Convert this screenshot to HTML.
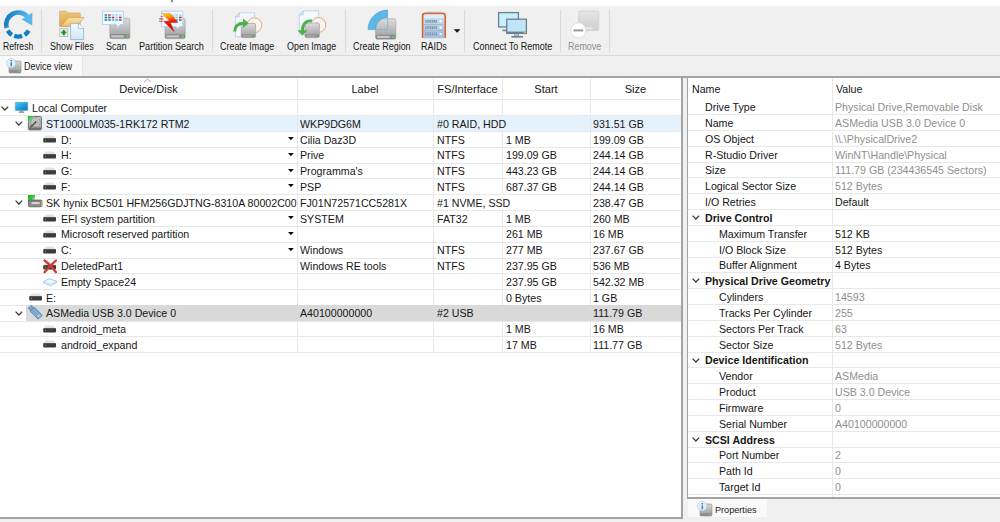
<!DOCTYPE html><html><head><meta charset="utf-8"><style>
*{margin:0;padding:0;box-sizing:border-box}
html,body{width:1000px;height:522px;overflow:hidden;background:#f0f0f0;font-family:"Liberation Sans", sans-serif;color:#000}
.a{position:absolute}
svg{position:absolute;overflow:visible}
.t{position:absolute;white-space:nowrap;font-size:11.5px;line-height:16px;height:16px;transform:scaleX(0.925);transform-origin:0 0;color:#161616}
.tc{transform-origin:50% 0;text-align:center;transform:scaleX(0.965)}
.tb{position:absolute;white-space:nowrap;font-size:9.5px;line-height:12px;transform:scaleX(0.94);transform-origin:0 0;color:#1a1a1a}
.hl{position:absolute;height:1px;background:#e8e8e8}
.vl{position:absolute;width:1px;background:#e8e8e8}
.g{color:#8f8f8f}
.b{font-weight:bold}
</style></head><body>
<div class="a" style="left:0;top:0;width:1000px;height:5px;background:#fff"></div>
<div class="a" style="left:0;top:5px;width:1000px;height:1px;background:#f9f9f9"></div>
<div class="a" style="left:0;top:6px;width:1000px;height:1px;background:#f4f4f4"></div>
<div class="a" style="left:0;top:55px;width:1000px;height:1px;background:#d8d8d8"></div>
<div class="a" style="left:0;top:56px;width:82px;height:20px;background:#f9f9f9"></div>
<div class="a" style="left:82px;top:56px;width:1px;height:20px;background:#e6e6e6"></div>
<div class="tb" style="left:23.8px;top:61.4px;font-size:10px;transform:scaleX(0.9)">Device view</div>
<div class="a" style="left:0;top:76px;width:1000px;height:2px;background:#a3a3a3"></div>
<div class="a" style="left:0;top:78px;width:681px;height:439px;background:#fff"></div>
<div class="a" style="left:681px;top:76px;width:2px;height:443px;background:#a3a3a3"></div>
<div class="a" style="left:0;top:517px;width:683px;height:2px;background:#a3a3a3"></div>
<div class="a" style="left:688px;top:78px;width:312px;height:420px;background:#fff"></div>
<div class="a" style="left:687px;top:76px;width:1px;height:423px;background:#a3a3a3"></div>
<div class="a" style="left:687px;top:497px;width:313px;height:2px;background:#a3a3a3"></div>
<div class="a" style="left:688px;top:499px;width:79px;height:18px;background:#f9f9f9"></div>
<div class="tb" style="left:714.8px;top:503.5px;transform:scaleX(0.96)">Properties</div>
<svg style="left:6px;top:58px" width="16" height="16" viewBox="0 0 16 16"><defs><linearGradient id="idg" x1="0" y1="0" x2="0" y2="1"><stop offset="0" stop-color="#d4d4d4"/><stop offset="1" stop-color="#9a9a9a"/></linearGradient></defs><rect x="3" y="3" width="12" height="12" rx="1.2" fill="url(#idg)" stroke="#8a8a8a" stroke-width="0.6"/><rect x="3.3" y="12.2" width="11.4" height="2.5" fill="#8c8c8c"/><rect x="12" y="13" width="2" height="1" fill="#6fd36f"/><circle cx="5.2" cy="5.2" r="4.6" fill="#e6f2fa" fill-opacity="0.95" stroke="#a9cbe3" stroke-width="0.7"/><rect x="4.5" y="4.3" width="1.6" height="4" fill="#4d87b5"/><rect x="4.5" y="2" width="1.6" height="1.5" fill="#4d87b5"/></svg>
<svg style="left:697px;top:501px" width="16" height="16" viewBox="0 0 16 16"><defs><linearGradient id="idg" x1="0" y1="0" x2="0" y2="1"><stop offset="0" stop-color="#d4d4d4"/><stop offset="1" stop-color="#9a9a9a"/></linearGradient></defs><rect x="3" y="3" width="12" height="12" rx="1.2" fill="url(#idg)" stroke="#8a8a8a" stroke-width="0.6"/><rect x="3.3" y="12.2" width="11.4" height="2.5" fill="#8c8c8c"/><rect x="12" y="13" width="2" height="1" fill="#6fd36f"/><circle cx="5.2" cy="5.2" r="4.6" fill="#e6f2fa" fill-opacity="0.95" stroke="#a9cbe3" stroke-width="0.7"/><rect x="4.5" y="4.3" width="1.6" height="4" fill="#4d87b5"/><rect x="4.5" y="2" width="1.6" height="1.5" fill="#4d87b5"/></svg>
<div class="t tc" style="left:0;top:81px;width:297px">Device/Disk</div>
<div class="t tc" style="left:297px;top:81px;width:136px">Label</div>
<div class="t tc" style="left:433px;top:81px;width:69px">FS/Interface</div>
<div class="t tc" style="left:502px;top:81px;width:88px">Start</div>
<div class="t tc" style="left:590px;top:81px;width:91px">Size</div>
<svg style="left:143.4px;top:77.6px" width="9" height="5" viewBox="0 0 9 5"><path d="M1 4.2 L4.5 1 L8 4.2" fill="none" stroke="#9a9a9a" stroke-width="0.9"/></svg>
<div class="hl" style="left:0;top:99px;width:681px"></div>
<div class="hl" style="left:0;top:115px;width:681px"></div>
<svg style="left:1px;top:106px" width="8" height="5" viewBox="0 0 8 5"><path d="M0.6 0.6 L3.9 4 L7.2 0.6" fill="none" stroke="#3a3a3a" stroke-width="1.25"/></svg>
<svg style="left:14.5px;top:102px" width="13" height="11" viewBox="0 0 13 11"><defs><linearGradient id="pcg" x1="0" y1="0" x2="1" y2="1"><stop offset="0" stop-color="#3ed0f2"/><stop offset="1" stop-color="#0a6fc2"/></linearGradient></defs><rect x="0.3" y="0.3" width="12.4" height="8.2" rx="0.4" fill="url(#pcg)" stroke="#5a8fb8" stroke-width="0.5"/><rect x="5.7" y="8.5" width="1.6" height="1.2" fill="#7a8a96"/><rect x="3.8" y="9.6" width="5.4" height="1" fill="#55606a"/></svg>
<div class="t" style="left:32px;top:100.0px;max-width:286.48648648648646px;overflow:hidden">Local Computer</div>
<div class="a" style="left:26px;top:116px;width:655px;height:15px;background:#e5f1fb"></div>
<div class="hl" style="left:0;top:131px;width:681px"></div>
<svg style="left:15px;top:121px" width="8" height="5" viewBox="0 0 8 5"><path d="M0.6 0.6 L3.9 4 L7.2 0.6" fill="none" stroke="#3a3a3a" stroke-width="1.25"/></svg>
<svg style="left:27.6px;top:115.6px" width="14" height="15" viewBox="0 0 14 15"><defs><linearGradient id="hdg" x1="0" y1="0" x2="0" y2="1"><stop offset="0" stop-color="#c4c4c4"/><stop offset="1" stop-color="#a4a4a4"/></linearGradient><linearGradient id="hgr" x1="0" y1="0" x2="1" y2="1"><stop offset="0" stop-color="#00c000"/><stop offset="0.5" stop-color="#60d060" stop-opacity="0.5"/></linearGradient></defs><rect x="0.5" y="0.5" width="13" height="13.4" rx="1.5" fill="url(#hdg)" stroke="#6a6a6a" stroke-width="0.9"/><circle cx="7.5" cy="6.2" r="4.6" fill="#d2d2d2" stroke="#8a8a8a" stroke-width="0.8"/><circle cx="7.5" cy="6.2" r="2.6" fill="none" stroke="#9c9c9c" stroke-width="0.8"/><circle cx="7.5" cy="6.2" r="1" fill="#303030"/><path d="M6.6 7.4 L2.8 11" stroke="#5e5e5e" stroke-width="1.8" stroke-linecap="round"/><rect x="0.9" y="11.6" width="12.2" height="2" fill="#707070"/><path d="M0 0 H7.4 L0 7.4 Z" fill="url(#hgr)"/></svg>
<div class="t" style="left:45.8px;top:115.8px;max-width:271.56756756756755px;overflow:hidden">ST1000LM035-1RK172 RTM2</div>
<div class="t" style="left:300px;top:115.8px">WKP9DG6M</div>
<div class="t" style="left:436.5px;top:115.8px">#0 RAID, HDD</div>
<div class="t" style="left:593px;top:115.8px">931.51 GB</div>
<div class="hl" style="left:0;top:147px;width:681px"></div>
<svg style="left:43px;top:136px" width="14" height="8" viewBox="0 0 14 8"><path d="M2.6 -0.4 H10.6 L12.6 2.2 H0.6 Z" fill="#e2e2e2"/><rect x="0.2" y="1.9" width="12.8" height="4.6" rx="1.1" fill="#3a3a3a"/><rect x="1" y="2.3" width="11.2" height="0.8" fill="#5e5e5e"/><circle cx="2.5" cy="4.4" r="0.65" fill="#3cb83c"/></svg>
<div class="t" style="left:60.5px;top:131.6px;max-width:255.67567567567568px;overflow:hidden">D:</div>
<svg style="left:288.3px;top:136.5px" width="6" height="4" viewBox="0 0 6 4"><path d="M0 0 H5.8 L2.9 3.3 Z" fill="#0a0a0a"/></svg>
<div class="t" style="left:300px;top:131.6px">Cilia Daz3D</div>
<div class="t" style="left:436.5px;top:131.6px">NTFS</div>
<div class="t" style="left:505.5px;top:131.6px">1 MB</div>
<div class="t" style="left:593px;top:131.6px">199.09 GB</div>
<div class="hl" style="left:0;top:163px;width:681px"></div>
<svg style="left:43px;top:152px" width="14" height="8" viewBox="0 0 14 8"><path d="M2.6 -0.4 H10.6 L12.6 2.2 H0.6 Z" fill="#e2e2e2"/><rect x="0.2" y="1.9" width="12.8" height="4.6" rx="1.1" fill="#3a3a3a"/><rect x="1" y="2.3" width="11.2" height="0.8" fill="#5e5e5e"/><circle cx="2.5" cy="4.4" r="0.65" fill="#3cb83c"/></svg>
<div class="t" style="left:60.5px;top:147.4px;max-width:255.67567567567568px;overflow:hidden">H:</div>
<svg style="left:288.3px;top:152.5px" width="6" height="4" viewBox="0 0 6 4"><path d="M0 0 H5.8 L2.9 3.3 Z" fill="#0a0a0a"/></svg>
<div class="t" style="left:300px;top:147.4px">Prive</div>
<div class="t" style="left:436.5px;top:147.4px">NTFS</div>
<div class="t" style="left:505.5px;top:147.4px">199.09 GB</div>
<div class="t" style="left:593px;top:147.4px">244.14 GB</div>
<div class="hl" style="left:0;top:178px;width:681px"></div>
<svg style="left:43px;top:168px" width="14" height="8" viewBox="0 0 14 8"><path d="M2.6 -0.4 H10.6 L12.6 2.2 H0.6 Z" fill="#e2e2e2"/><rect x="0.2" y="1.9" width="12.8" height="4.6" rx="1.1" fill="#3a3a3a"/><rect x="1" y="2.3" width="11.2" height="0.8" fill="#5e5e5e"/><circle cx="2.5" cy="4.4" r="0.65" fill="#3cb83c"/></svg>
<div class="t" style="left:60.5px;top:163.2px;max-width:255.67567567567568px;overflow:hidden">G:</div>
<svg style="left:288.3px;top:168.5px" width="6" height="4" viewBox="0 0 6 4"><path d="M0 0 H5.8 L2.9 3.3 Z" fill="#0a0a0a"/></svg>
<div class="t" style="left:300px;top:163.2px">Programma&#x27;s</div>
<div class="t" style="left:436.5px;top:163.2px">NTFS</div>
<div class="t" style="left:505.5px;top:163.2px">443.23 GB</div>
<div class="t" style="left:593px;top:163.2px">244.14 GB</div>
<div class="hl" style="left:0;top:194px;width:681px"></div>
<svg style="left:43px;top:183px" width="14" height="8" viewBox="0 0 14 8"><path d="M2.6 -0.4 H10.6 L12.6 2.2 H0.6 Z" fill="#e2e2e2"/><rect x="0.2" y="1.9" width="12.8" height="4.6" rx="1.1" fill="#3a3a3a"/><rect x="1" y="2.3" width="11.2" height="0.8" fill="#5e5e5e"/><circle cx="2.5" cy="4.4" r="0.65" fill="#3cb83c"/></svg>
<div class="t" style="left:60.5px;top:179.0px;max-width:255.67567567567568px;overflow:hidden">F:</div>
<svg style="left:288.3px;top:183.5px" width="6" height="4" viewBox="0 0 6 4"><path d="M0 0 H5.8 L2.9 3.3 Z" fill="#0a0a0a"/></svg>
<div class="t" style="left:300px;top:179.0px">PSP</div>
<div class="t" style="left:436.5px;top:179.0px">NTFS</div>
<div class="t" style="left:505.5px;top:179.0px">687.37 GB</div>
<div class="t" style="left:593px;top:179.0px">244.14 GB</div>
<div class="hl" style="left:0;top:210px;width:681px"></div>
<svg style="left:15px;top:200px" width="8" height="5" viewBox="0 0 8 5"><path d="M0.6 0.6 L3.9 4 L7.2 0.6" fill="none" stroke="#3a3a3a" stroke-width="1.25"/></svg>
<svg style="left:28px;top:194.5px" width="15" height="13" viewBox="0 0 15 13"><defs><linearGradient id="nvg" x1="0" y1="0" x2="1" y2="1"><stop offset="0" stop-color="#00c000"/><stop offset="0.55" stop-color="#40c840"/><stop offset="1" stop-color="#e0f4e0" stop-opacity="0.2"/></linearGradient></defs><rect x="0" y="0" width="7" height="7" fill="url(#nvg)"/><rect x="0.4" y="5" width="13.6" height="6.8" rx="1.4" fill="#8a8a8a" stroke="#555" stroke-width="0.7"/><rect x="3" y="6.7" width="9" height="3" fill="#d2d2d2" stroke="#6a6a6a" stroke-width="0.5"/><rect x="13.2" y="6" width="1" height="5" fill="#e0b050"/></svg>
<div class="t" style="left:45.8px;top:194.8px;max-width:271.56756756756755px;overflow:hidden">SK hynix BC501 HFM256GDJTNG-8310A 80002C00</div>
<div class="t" style="left:300px;top:194.8px">FJ01N72571CC5281X</div>
<div class="t" style="left:436.5px;top:194.8px">#1 NVME, SSD</div>
<div class="t" style="left:593px;top:194.8px">238.47 GB</div>
<div class="hl" style="left:0;top:226px;width:681px"></div>
<svg style="left:43px;top:215px" width="14" height="8" viewBox="0 0 14 8"><path d="M2.6 -0.4 H10.6 L12.6 2.2 H0.6 Z" fill="#e2e2e2"/><rect x="0.2" y="1.9" width="12.8" height="4.6" rx="1.1" fill="#3a3a3a"/><rect x="1" y="2.3" width="11.2" height="0.8" fill="#5e5e5e"/><circle cx="2.5" cy="4.4" r="0.65" fill="#3cb83c"/></svg>
<div class="t" style="left:60.5px;top:210.60000000000002px;max-width:255.67567567567568px;overflow:hidden">EFI system partition</div>
<svg style="left:288.3px;top:215.5px" width="6" height="4" viewBox="0 0 6 4"><path d="M0 0 H5.8 L2.9 3.3 Z" fill="#0a0a0a"/></svg>
<div class="t" style="left:300px;top:210.60000000000002px">SYSTEM</div>
<div class="t" style="left:436.5px;top:210.60000000000002px">FAT32</div>
<div class="t" style="left:505.5px;top:210.60000000000002px">1 MB</div>
<div class="t" style="left:593px;top:210.60000000000002px">260 MB</div>
<div class="hl" style="left:0;top:242px;width:681px"></div>
<svg style="left:43px;top:231px" width="14" height="8" viewBox="0 0 14 8"><path d="M2.6 -0.4 H10.6 L12.6 2.2 H0.6 Z" fill="#e2e2e2"/><rect x="0.2" y="1.9" width="12.8" height="4.6" rx="1.1" fill="#3a3a3a"/><rect x="1" y="2.3" width="11.2" height="0.8" fill="#5e5e5e"/><circle cx="2.5" cy="4.4" r="0.65" fill="#3cb83c"/></svg>
<div class="t" style="left:60.5px;top:226.4px;max-width:255.67567567567568px;overflow:hidden">Microsoft reserved partition</div>
<svg style="left:288.3px;top:231.5px" width="6" height="4" viewBox="0 0 6 4"><path d="M0 0 H5.8 L2.9 3.3 Z" fill="#0a0a0a"/></svg>
<div class="t" style="left:505.5px;top:226.4px">261 MB</div>
<div class="t" style="left:593px;top:226.4px">16 MB</div>
<div class="hl" style="left:0;top:258px;width:681px"></div>
<svg style="left:43px;top:247px" width="14" height="8" viewBox="0 0 14 8"><path d="M2.6 -0.4 H10.6 L12.6 2.2 H0.6 Z" fill="#e2e2e2"/><rect x="0.2" y="1.9" width="12.8" height="4.6" rx="1.1" fill="#3a3a3a"/><rect x="1" y="2.3" width="11.2" height="0.8" fill="#5e5e5e"/><circle cx="2.5" cy="4.4" r="0.65" fill="#3cb83c"/></svg>
<div class="t" style="left:60.5px;top:242.20000000000002px;max-width:255.67567567567568px;overflow:hidden">C:</div>
<svg style="left:288.3px;top:247.5px" width="6" height="4" viewBox="0 0 6 4"><path d="M0 0 H5.8 L2.9 3.3 Z" fill="#0a0a0a"/></svg>
<div class="t" style="left:300px;top:242.20000000000002px">Windows</div>
<div class="t" style="left:436.5px;top:242.20000000000002px">NTFS</div>
<div class="t" style="left:505.5px;top:242.20000000000002px">277 MB</div>
<div class="t" style="left:593px;top:242.20000000000002px">237.67 GB</div>
<div class="hl" style="left:0;top:273px;width:681px"></div>
<svg style="left:43px;top:263px" width="14" height="8" viewBox="0 0 14 8"><path d="M2.6 -0.4 H10.6 L12.6 2.2 H0.6 Z" fill="#e2e2e2"/><rect x="0.2" y="1.9" width="12.8" height="4.6" rx="1.1" fill="#3a3a3a"/><rect x="1" y="2.3" width="11.2" height="0.8" fill="#5e5e5e"/><circle cx="2.5" cy="4.4" r="0.65" fill="#3cb83c"/></svg><svg style="left:43px;top:259px" width="15" height="15" viewBox="0 0 15 15"><path d="M1.5 1.5 C5 4 9 8 13 13.2 M13 1.5 C9 5 5 9 1.5 13.2" fill="none" stroke="#d23a34" stroke-width="2.3" stroke-linecap="round"/></svg>
<div class="t" style="left:60.5px;top:258.0px;max-width:255.67567567567568px;overflow:hidden">DeletedPart1</div>
<div class="t" style="left:300px;top:258.0px">Windows RE tools</div>
<div class="t" style="left:436.5px;top:258.0px">NTFS</div>
<div class="t" style="left:505.5px;top:258.0px">237.95 GB</div>
<div class="t" style="left:593px;top:258.0px">536 MB</div>
<div class="hl" style="left:0;top:289px;width:681px"></div>
<svg style="left:42px;top:277.5px" width="16" height="10" viewBox="0 0 16 10"><path d="M1.6 3.6 L7.2 0.8 L14.6 3 L14.6 4.4 L8.6 7.6 L1.6 5 Z" fill="#f2f9fe" stroke="#8ec6ef" stroke-width="0.9" stroke-linejoin="round"/><path d="M1.6 3.6 L8.6 6.2 L14.6 3" fill="none" stroke="#a6d2f2" stroke-width="0.6"/></svg>
<div class="t" style="left:60.5px;top:273.8px;max-width:255.67567567567568px;overflow:hidden">Empty Space24</div>
<div class="t" style="left:505.5px;top:273.8px">237.95 GB</div>
<div class="t" style="left:593px;top:273.8px">542.32 MB</div>
<div class="hl" style="left:0;top:305px;width:681px"></div>
<svg style="left:29px;top:294px" width="14" height="8" viewBox="0 0 14 8"><path d="M2.6 -0.4 H10.6 L12.6 2.2 H0.6 Z" fill="#e2e2e2"/><rect x="0.2" y="1.9" width="12.8" height="4.6" rx="1.1" fill="#3a3a3a"/><rect x="1" y="2.3" width="11.2" height="0.8" fill="#5e5e5e"/><circle cx="2.5" cy="4.4" r="0.65" fill="#3cb83c"/></svg>
<div class="t" style="left:45.8px;top:289.6px;max-width:271.56756756756755px;overflow:hidden">E:</div>
<div class="t" style="left:505.5px;top:289.6px">0 Bytes</div>
<div class="t" style="left:593px;top:289.6px">1 GB</div>
<div class="a" style="left:26px;top:305px;width:655px;height:16px;background:#d9d9d9"></div>
<div class="hl" style="left:0;top:321px;width:681px"></div>
<svg style="left:15px;top:311px" width="8" height="5" viewBox="0 0 8 5"><path d="M0.6 0.6 L3.9 4 L7.2 0.6" fill="none" stroke="#3a3a3a" stroke-width="1.25"/></svg>
<svg style="left:28px;top:305px" width="15" height="15" viewBox="0 0 15 15"><g transform="rotate(-45 7.5 7.5)"><rect x="5.4" y="-0.6" width="4.2" height="3.4" fill="#7ea8d0" stroke="#4e7aa8" stroke-width="0.7"/><rect x="4.6" y="2.8" width="5.8" height="11.4" rx="1" fill="#7ea8d0" stroke="#4e7aa8" stroke-width="0.7"/><rect x="6.4" y="11.4" width="2.2" height="1.4" fill="#d6e4f0"/></g></svg>
<div class="t" style="left:45.8px;top:305.4px;max-width:271.56756756756755px;overflow:hidden">ASMedia USB 3.0 Device 0</div>
<div class="t" style="left:300px;top:305.4px">A40100000000</div>
<div class="t" style="left:436.5px;top:305.4px">#2 USB</div>
<div class="t" style="left:593px;top:305.4px">111.79 GB</div>
<div class="hl" style="left:0;top:336px;width:681px"></div>
<svg style="left:43px;top:326px" width="14" height="8" viewBox="0 0 14 8"><path d="M2.6 -0.4 H10.6 L12.6 2.2 H0.6 Z" fill="#e2e2e2"/><rect x="0.2" y="1.9" width="12.8" height="4.6" rx="1.1" fill="#3a3a3a"/><rect x="1" y="2.3" width="11.2" height="0.8" fill="#5e5e5e"/><circle cx="2.5" cy="4.4" r="0.65" fill="#3cb83c"/></svg>
<div class="t" style="left:60.5px;top:321.20000000000005px;max-width:255.67567567567568px;overflow:hidden">android_meta</div>
<div class="t" style="left:505.5px;top:321.20000000000005px">1 MB</div>
<div class="t" style="left:593px;top:321.20000000000005px">16 MB</div>
<div class="hl" style="left:0;top:352px;width:681px"></div>
<svg style="left:43px;top:341px" width="14" height="8" viewBox="0 0 14 8"><path d="M2.6 -0.4 H10.6 L12.6 2.2 H0.6 Z" fill="#e2e2e2"/><rect x="0.2" y="1.9" width="12.8" height="4.6" rx="1.1" fill="#3a3a3a"/><rect x="1" y="2.3" width="11.2" height="0.8" fill="#5e5e5e"/><circle cx="2.5" cy="4.4" r="0.65" fill="#3cb83c"/></svg>
<div class="t" style="left:60.5px;top:337.0px;max-width:255.67567567567568px;overflow:hidden">android_expand</div>
<div class="t" style="left:505.5px;top:337.0px">17 MB</div>
<div class="t" style="left:593px;top:337.0px">111.77 GB</div>
<div class="vl" style="left:297px;top:78px;height:227px"></div>
<div class="vl" style="left:297px;top:322px;height:30px"></div>
<div class="vl" style="left:433px;top:78px;height:227px"></div>
<div class="vl" style="left:433px;top:322px;height:30px"></div>
<div class="vl" style="left:590px;top:78px;height:227px"></div>
<div class="vl" style="left:590px;top:322px;height:30px"></div>
<div class="vl" style="left:502px;top:78px;height:38px"></div>
<div class="vl" style="left:502px;top:132px;height:63px"></div>
<div class="vl" style="left:502px;top:211px;height:94px"></div>
<div class="vl" style="left:502px;top:322px;height:30px"></div>
<div class="t" style="left:691.5px;top:81px">Name</div>
<div class="t" style="left:835.8px;top:81px">Value</div>
<div class="hl" style="left:688px;top:114px;width:312px"></div>
<div class="t" style="left:704.5px;top:99.1px">Drive Type</div>
<div class="t g" style="left:834.5px;top:99.1px">Physical Drive,Removable Disk</div>
<div class="hl" style="left:688px;top:130px;width:312px"></div>
<div class="t" style="left:704.5px;top:114.92999999999999px">Name</div>
<div class="t g" style="left:834.5px;top:114.92999999999999px">ASMedia USB 3.0 Device 0</div>
<div class="hl" style="left:688px;top:146px;width:312px"></div>
<div class="t" style="left:704.5px;top:130.76000000000002px">OS Object</div>
<div class="t g" style="left:834.5px;top:130.76000000000002px">\\.\PhysicalDrive2</div>
<div class="hl" style="left:688px;top:162px;width:312px"></div>
<div class="t" style="left:704.5px;top:146.59px">R-Studio Driver</div>
<div class="t g" style="left:834.5px;top:146.59px">WinNT\Handle\Physical</div>
<div class="hl" style="left:688px;top:177px;width:312px"></div>
<div class="t" style="left:704.5px;top:162.42000000000002px">Size</div>
<div class="t g" style="left:834.5px;top:162.42000000000002px">111.79 GB (234436545 Sectors)</div>
<div class="hl" style="left:688px;top:193px;width:312px"></div>
<div class="t" style="left:704.5px;top:178.25px">Logical Sector Size</div>
<div class="t g" style="left:834.5px;top:178.25px">512 Bytes</div>
<div class="hl" style="left:688px;top:209px;width:312px"></div>
<div class="t" style="left:704.5px;top:194.08px">I/O Retries</div>
<div class="t " style="left:834.5px;top:194.08px">Default</div>
<div class="hl" style="left:688px;top:225px;width:312px"></div>
<svg style="left:692px;top:215px" width="8" height="5" viewBox="0 0 8 5"><path d="M0.6 0.6 L3.9 4 L7.2 0.6" fill="none" stroke="#3a3a3a" stroke-width="1.25"/></svg>
<div class="t b" style="left:704.5px;top:209.91000000000003px">Drive Control</div>
<div class="hl" style="left:688px;top:241px;width:312px"></div>
<div class="t" style="left:718.5px;top:225.74px">Maximum Transfer</div>
<div class="t " style="left:834.5px;top:225.74px">512 KB</div>
<div class="hl" style="left:688px;top:257px;width:312px"></div>
<div class="t" style="left:718.5px;top:241.57px">I/O Block Size</div>
<div class="t " style="left:834.5px;top:241.57px">512 Bytes</div>
<div class="hl" style="left:688px;top:272px;width:312px"></div>
<div class="t" style="left:718.5px;top:257.40000000000003px">Buffer Alignment</div>
<div class="t " style="left:834.5px;top:257.40000000000003px">4 Bytes</div>
<div class="hl" style="left:688px;top:288px;width:312px"></div>
<svg style="left:692px;top:278px" width="8" height="5" viewBox="0 0 8 5"><path d="M0.6 0.6 L3.9 4 L7.2 0.6" fill="none" stroke="#3a3a3a" stroke-width="1.25"/></svg>
<div class="t b" style="left:704.5px;top:273.23px">Physical Drive Geometry</div>
<div class="hl" style="left:688px;top:304px;width:312px"></div>
<div class="t" style="left:718.5px;top:289.06px">Cylinders</div>
<div class="t g" style="left:834.5px;top:289.06px">14593</div>
<div class="hl" style="left:688px;top:320px;width:312px"></div>
<div class="t" style="left:718.5px;top:304.89px">Tracks Per Cylinder</div>
<div class="t g" style="left:834.5px;top:304.89px">255</div>
<div class="hl" style="left:688px;top:336px;width:312px"></div>
<div class="t" style="left:718.5px;top:320.72px">Sectors Per Track</div>
<div class="t g" style="left:834.5px;top:320.72px">63</div>
<div class="hl" style="left:688px;top:352px;width:312px"></div>
<div class="t" style="left:718.5px;top:336.55px">Sector Size</div>
<div class="t g" style="left:834.5px;top:336.55px">512 Bytes</div>
<div class="hl" style="left:688px;top:367px;width:312px"></div>
<svg style="left:692px;top:358px" width="8" height="5" viewBox="0 0 8 5"><path d="M0.6 0.6 L3.9 4 L7.2 0.6" fill="none" stroke="#3a3a3a" stroke-width="1.25"/></svg>
<div class="t b" style="left:704.5px;top:352.38px">Device Identification</div>
<div class="hl" style="left:688px;top:383px;width:312px"></div>
<div class="t" style="left:718.5px;top:368.21000000000004px">Vendor</div>
<div class="t g" style="left:834.5px;top:368.21000000000004px">ASMedia</div>
<div class="hl" style="left:688px;top:399px;width:312px"></div>
<div class="t" style="left:718.5px;top:384.04px">Product</div>
<div class="t g" style="left:834.5px;top:384.04px">USB 3.0 Device</div>
<div class="hl" style="left:688px;top:415px;width:312px"></div>
<div class="t" style="left:718.5px;top:399.87px">Firmware</div>
<div class="t g" style="left:834.5px;top:399.87px">0</div>
<div class="hl" style="left:688px;top:431px;width:312px"></div>
<div class="t" style="left:718.5px;top:415.70000000000005px">Serial Number</div>
<div class="t g" style="left:834.5px;top:415.70000000000005px">A40100000000</div>
<div class="hl" style="left:688px;top:447px;width:312px"></div>
<svg style="left:692px;top:437px" width="8" height="5" viewBox="0 0 8 5"><path d="M0.6 0.6 L3.9 4 L7.2 0.6" fill="none" stroke="#3a3a3a" stroke-width="1.25"/></svg>
<div class="t b" style="left:704.5px;top:431.53000000000003px">SCSI Address</div>
<div class="hl" style="left:688px;top:462px;width:312px"></div>
<div class="t" style="left:718.5px;top:447.36px">Port Number</div>
<div class="t g" style="left:834.5px;top:447.36px">2</div>
<div class="hl" style="left:688px;top:478px;width:312px"></div>
<div class="t" style="left:718.5px;top:463.19px">Path Id</div>
<div class="t g" style="left:834.5px;top:463.19px">0</div>
<div class="hl" style="left:688px;top:494px;width:312px"></div>
<div class="t" style="left:718.5px;top:479.02000000000004px">Target Id</div>
<div class="t g" style="left:834.5px;top:479.02000000000004px">0</div>
<div class="vl" style="left:832px;top:78px;height:419px"></div>
<div class="tb" style="left:2.8px;top:40.9px;font-size:10px;color:#161616;transform:scaleX(0.864)">Refresh</div>
<div class="tb" style="left:50px;top:40.9px;font-size:10px;color:#161616;transform:scaleX(0.893)">Show Files</div>
<div class="tb" style="left:106px;top:40.9px;font-size:10px;color:#161616;transform:scaleX(0.893)">Scan</div>
<div class="tb" style="left:138.6px;top:40.9px;font-size:10px;color:#161616;transform:scaleX(0.912)">Partition Search</div>
<div class="tb" style="left:219.5px;top:40.9px;font-size:10px;color:#161616;transform:scaleX(0.893)">Create Image</div>
<div class="tb" style="left:287px;top:40.9px;font-size:10px;color:#161616;transform:scaleX(0.893)">Open Image</div>
<div class="tb" style="left:352.8px;top:40.9px;font-size:10px;color:#161616;transform:scaleX(0.893)">Create Region</div>
<div class="tb" style="left:421px;top:40.9px;font-size:10px;color:#161616;transform:scaleX(0.893)">RAIDs</div>
<div class="tb" style="left:472.6px;top:40.9px;font-size:10px;color:#161616;transform:scaleX(0.899)">Connect To Remote</div>
<div class="tb" style="left:568.2px;top:40.9px;font-size:10px;color:#8d8d8d;transform:scaleX(0.893)">Remove</div>
<div class="a" style="left:41px;top:10px;width:1px;height:42px;background:#dadada"></div>
<div class="a" style="left:212px;top:10px;width:1px;height:42px;background:#dadada"></div>
<div class="a" style="left:345px;top:10px;width:1px;height:42px;background:#dadada"></div>
<div class="a" style="left:464px;top:10px;width:1px;height:42px;background:#dadada"></div>
<div class="a" style="left:560px;top:10px;width:1px;height:42px;background:#dadada"></div>
<div class="a" style="left:609px;top:10px;width:1px;height:42px;background:#dadada"></div>
<svg style="left:0;top:0" width="1000" height="56" viewBox="0 0 1000 56">
<defs>
<linearGradient id="rfg" x1="0" y1="0" x2="1" y2="0.3"><stop offset="0" stop-color="#0b78c2"/><stop offset="1" stop-color="#5cb9ea"/></linearGradient>
<linearGradient id="drv" x1="0" y1="0" x2="0" y2="1"><stop offset="0" stop-color="#dcdcdc"/><stop offset="1" stop-color="#9c9c9c"/></linearGradient>
<linearGradient id="drvf" x1="0" y1="0" x2="0" y2="1"><stop offset="0" stop-color="#e6e6e6"/><stop offset="1" stop-color="#cdcdcd"/></linearGradient>
<linearGradient id="fold" x1="0" y1="0" x2="0" y2="1"><stop offset="0" stop-color="#f0c878"/><stop offset="1" stop-color="#dca24a"/></linearGradient>
<linearGradient id="flap" x1="0" y1="0" x2="0" y2="1"><stop offset="0" stop-color="#fbe3a6"/><stop offset="1" stop-color="#f0c26a"/></linearGradient>
<linearGradient id="doc" x1="0" y1="0" x2="0" y2="1"><stop offset="0" stop-color="#f6fbff"/><stop offset="1" stop-color="#cfe6f6"/></linearGradient>
<linearGradient id="bolt" gradientUnits="userSpaceOnUse" x1="168" y1="13.6" x2="170" y2="24"><stop offset="0" stop-color="#ffd000"/><stop offset="0.45" stop-color="#f27a0a"/><stop offset="0.8" stop-color="#e41a12"/><stop offset="1" stop-color="#dc0e0e"/></linearGradient>
<linearGradient id="raid" x1="0" y1="0" x2="0" y2="1"><stop offset="0" stop-color="#cfe3f3"/><stop offset="1" stop-color="#9cbad6"/></linearGradient>
</defs>
<path d="M6.66 27.91 A12.0 12.0 0 0 1 27.66 17.21" fill="none" stroke="url(#rfg)" stroke-width="4.6"/>
<path d="M21.8 19.6 L32.4 12.6 L32.2 25.6 Z" fill="#5ab6e8"/>
<path d="M11.84 34.78 A12.0 12.0 0 0 1 7.81 30.60" fill="none" stroke="#0d80c8" stroke-width="4.4"/>
<path d="M22.11 35.95 A12.0 12.0 0 0 1 14.29 35.95" fill="none" stroke="#0d80c8" stroke-width="4.4"/>
<path d="M28.59 30.60 A12.0 12.0 0 0 1 24.56 34.78" fill="none" stroke="#0d80c8" stroke-width="4.4"/>
<path d="M59.6 11.2 H66 L67.5 13 H80.2 V26.3 H59.6 Z" fill="url(#fold)" stroke="#c9a870" stroke-width="0.7"/>
<path d="M61 26.3 L68.4 17.4 H84 L77 26.3 Z" fill="url(#flap)" stroke="#c9a060" stroke-width="0.7"/>
<path d="M70.6 23.6 H78.6 L83.6 28.4 V39.6 H70.6 Z" fill="url(#doc)" stroke="#8fb0c8" stroke-width="0.8"/>
<path d="M78.4 23.6 V28.6 H83.6" fill="#ffffff" stroke="#8fb0c8" stroke-width="0.7"/>
<rect x="59.8" y="28.8" width="8" height="7.6" fill="#e8f6e8" stroke="#a8a8a8" stroke-width="0.7"/>
<path d="M63.8 30 V35.2 M61.2 32.6 H66.4" stroke="#1d8a2c" stroke-width="2"/>
<rect x="109.8" y="18.2" width="20.000000000000014" height="20.400000000000002" rx="1.6" fill="url(#drv)" stroke="#9a9a9a" stroke-width="0.6"/><rect x="110.1" y="34.112" width="19.400000000000013" height="4.188000000000001" rx="1" fill="#8a8a8a"/><rect x="111.3" y="35.312000000000005" width="12.40000000000001" height="2.0880000000000005" fill="#c8c8c8"/><rect x="126.60000000000001" y="35.212" width="2" height="2.2880000000000003" fill="#5fd35f"/>
<path d="M102.5 11.2 H123.4 V24.6 H120 L118 27.8 L116.5 24.6 H102.5 Z" fill="#f4faff" stroke="#a9d2ec" stroke-width="0.9"/>
<rect x="104.60" y="14.20" width="2.6" height="1.6" fill="#3a8aa6"/>
<rect x="108.20" y="14.20" width="2.6" height="1.6" fill="#e04040"/>
<rect x="111.80" y="14.20" width="2.6" height="1.6" fill="#a8d8f0"/>
<rect x="115.40" y="14.20" width="2.6" height="1.6" fill="#a8d8f0"/>
<rect x="119.00" y="14.20" width="2.6" height="1.6" fill="#a8d8f0"/>
<rect x="104.60" y="16.70" width="2.6" height="1.6" fill="#1e6e8a"/>
<rect x="108.20" y="16.70" width="2.6" height="1.6" fill="#1e6e8a"/>
<rect x="111.80" y="16.70" width="2.6" height="1.6" fill="#e02020"/>
<rect x="115.40" y="16.70" width="2.6" height="1.6" fill="#8ccbea"/>
<rect x="119.00" y="16.70" width="2.6" height="1.6" fill="#e02020"/>
<rect x="104.60" y="19.20" width="2.6" height="1.6" fill="#2a7a90"/>
<rect x="108.20" y="19.20" width="2.6" height="1.6" fill="#3a8a96"/>
<rect x="111.80" y="19.20" width="2.6" height="1.6" fill="#2ab8e0"/>
<rect x="115.40" y="19.20" width="2.6" height="1.6" fill="#2ab8e0"/>
<rect x="119.00" y="19.20" width="2.6" height="1.6" fill="#2a7a90"/>
<rect x="165" y="18.4" width="20.19999999999999" height="20.200000000000003" rx="1.6" fill="url(#drv)" stroke="#9a9a9a" stroke-width="0.6"/><rect x="165.3" y="34.156" width="19.599999999999987" height="4.144000000000001" rx="1" fill="#8a8a8a"/><rect x="166.5" y="35.356" width="12.523999999999992" height="2.044000000000001" fill="#c8c8c8"/><rect x="182.0" y="35.256" width="2" height="2.2440000000000007" fill="#5fd35f"/>
<path d="M161.5 11.2 H182.8 V26.6 H179.4 L177.6 28.8 L176.2 26.6 H161.5 Z" fill="#f4faff" stroke="#a9d2ec" stroke-width="0.9"/>
<rect x="171.80" y="14.20" width="2.6" height="1.6" fill="#a8d8f0"/>
<rect x="175.40" y="14.20" width="2.6" height="1.6" fill="#a8d8f0"/>
<rect x="179.00" y="14.20" width="2.6" height="1.6" fill="#a8d8f0"/>
<rect x="171.80" y="16.70" width="2.6" height="1.6" fill="#e02020"/>
<rect x="175.40" y="16.70" width="2.6" height="1.6" fill="#8ccbea"/>
<rect x="179.00" y="16.70" width="2.6" height="1.6" fill="#e02020"/>
<rect x="171.80" y="19.20" width="2.6" height="1.6" fill="#2ab8e0"/>
<rect x="175.40" y="19.20" width="2.6" height="1.6" fill="#2ab8e0"/>
<rect x="179.00" y="19.20" width="2.6" height="1.6" fill="#2a7a90"/>
<path d="M161.8 13.6 H170.2 L178.2 22.6 L170.6 22.8 L174.6 32.2 L163.4 21.2 L169.2 20.8 Z" fill="url(#bolt)" stroke="#e04020" stroke-width="0.3" stroke-linejoin="round"/>
<rect x="160.6" y="16.0" width="2.6" height="1.0" fill="#d24040" opacity="0.7"/>
<rect x="159.2" y="18.0" width="4.2" height="1.0" fill="#d24040" opacity="0.7"/>
<rect x="159.2" y="19.3" width="4.2" height="1.0" fill="#d24040" opacity="0.7"/>
<rect x="159.2" y="21.0" width="3.4" height="1.0" fill="#d24040" opacity="0.7"/>
<path d="M239.4 12.8 H254.6 V36.8 H235.4 V16.8 Z" fill="#f2f8fe" stroke="#b4cfe6" stroke-width="0.8"/><path d="M235.4 16.8 L239.4 12.8 V16.8 Z" fill="#e4eef8" stroke="#9cb8d4" stroke-width="0.6"/>
<circle cx="254.4" cy="25.2" r="7.4" fill="#fdf3ee" stroke="#c8a878" stroke-width="0.9"/><circle cx="252.9" cy="25.7" r="2.59" fill="#f6f0ea" stroke="#c8a878" stroke-width="0.6"/>
<rect x="241.2" y="23.4" width="14.400000000000006" height="14.200000000000003" rx="1.6" fill="url(#drv)" stroke="#9a9a9a" stroke-width="0.6"/><rect x="241.5" y="34.476" width="13.800000000000006" height="2.8240000000000007" rx="1" fill="#8a8a8a"/><rect x="242.7" y="35.676" width="8.928000000000003" height="0.7240000000000006" fill="#c8c8c8"/><rect x="252.4" y="35.576" width="2" height="0.9240000000000004" fill="#5fd35f"/>
<path d="M234.8 31.6 C234.8 25.8 237.8 23.2 244 23.2" fill="none" stroke="#4cb04c" stroke-width="2.9"/>
<path d="M243 18.6 L248.8 23.2 L243 27.9 Z" fill="#4cb04c"/>
<path d="M303.2 10.9 H318.6 V34.8 H299.2 V14.9 Z" fill="#f2f8fe" stroke="#b4cfe6" stroke-width="0.8"/><path d="M299.2 14.9 L303.2 10.9 V14.9 Z" fill="#e4eef8" stroke="#9cb8d4" stroke-width="0.6"/>
<circle cx="318.4" cy="25.0" r="7.4" fill="#fdf3ee" stroke="#c8a878" stroke-width="0.9"/><circle cx="316.9" cy="25.5" r="2.59" fill="#f6f0ea" stroke="#c8a878" stroke-width="0.6"/>
<rect x="305.0" y="23.0" width="14.399999999999977" height="14.600000000000001" rx="1.6" fill="url(#drv)" stroke="#9a9a9a" stroke-width="0.6"/><rect x="305.3" y="34.388" width="13.799999999999978" height="2.9120000000000004" rx="1" fill="#8a8a8a"/><rect x="306.5" y="35.588" width="8.927999999999987" height="0.8120000000000003" fill="#c8c8c8"/><rect x="316.2" y="35.488" width="2" height="1.012" fill="#5fd35f"/>
<path d="M311.8 20.6 C305.8 20.6 302.4 23.6 302.4 31" fill="none" stroke="#4cb04c" stroke-width="2.9"/>
<path d="M297.4 30.2 L307.4 30.2 L302.4 35.6 Z" fill="#4cb04c"/>
<rect x="375.6" y="18.8" width="20.19999999999999" height="20.400000000000002" rx="1.6" fill="url(#drv)" stroke="#9a9a9a" stroke-width="0.6"/><rect x="375.90000000000003" y="34.712" width="19.599999999999987" height="4.188000000000001" rx="1" fill="#8a8a8a"/><rect x="377.1" y="35.912000000000006" width="12.523999999999992" height="2.0880000000000005" fill="#c8c8c8"/><rect x="392.6" y="35.812000000000005" width="2" height="2.2880000000000003" fill="#5fd35f"/>
<path d="M368.0 29.6 A19.6 19.6 0 0 1 387.6 10.0 V17.400000000000002 A12.2 12.2 0 0 0 375.40000000000003 29.6 Z" fill="#5cb6e6" stroke="#3a9ad0" stroke-width="0.5"/>
<path d="M375.40000000000003 29.6 H387.6 V17.400000000000002" fill="none" stroke="#6ab4dc" stroke-width="0.7"/>
<rect x="426" y="11" width="15" height="2.4" rx="0.6" fill="#d6e6f0"/>
<rect x="423.4" y="15" width="21" height="23.2" fill="url(#raid)"/>
<path d="M422.6 38 V16 Q422.6 13.4 425.2 13.4 H442.6 Q445.2 13.4 445.2 16 V38" fill="none" stroke="#d2683a" stroke-width="1.7"/>
<rect x="423.6" y="36.6" width="20.6" height="1.6" fill="#b8cfe2"/>
<rect x="424" y="15" width="19.8" height="3" fill="#ddeef8"/>
<rect x="424" y="24.00" width="19.8" height="0.9" fill="#a2b8cc"/>
<rect x="425.2" y="20.00" width="11.6" height="2.6" fill="#7a94ae"/>
<rect x="425.80" y="20.50" width="0.8" height="1.6" fill="#c6d6e4"/>
<rect x="427.60" y="20.50" width="0.8" height="1.6" fill="#c6d6e4"/>
<rect x="429.40" y="20.50" width="0.8" height="1.6" fill="#c6d6e4"/>
<rect x="431.20" y="20.50" width="0.8" height="1.6" fill="#c6d6e4"/>
<rect x="433.00" y="20.50" width="0.8" height="1.6" fill="#c6d6e4"/>
<rect x="434.80" y="20.50" width="0.8" height="1.6" fill="#c6d6e4"/>
<circle cx="440.6" cy="21.30" r="1.2" fill="#f4f8fc"/>
<rect x="424" y="30.30" width="19.8" height="0.9" fill="#a2b8cc"/>
<rect x="425.2" y="26.30" width="11.6" height="2.6" fill="#7a94ae"/>
<rect x="425.80" y="26.80" width="0.8" height="1.6" fill="#c6d6e4"/>
<rect x="427.60" y="26.80" width="0.8" height="1.6" fill="#c6d6e4"/>
<rect x="429.40" y="26.80" width="0.8" height="1.6" fill="#c6d6e4"/>
<rect x="431.20" y="26.80" width="0.8" height="1.6" fill="#c6d6e4"/>
<rect x="433.00" y="26.80" width="0.8" height="1.6" fill="#c6d6e4"/>
<rect x="434.80" y="26.80" width="0.8" height="1.6" fill="#c6d6e4"/>
<circle cx="440.6" cy="27.60" r="1.2" fill="#f4f8fc"/>
<rect x="424" y="36.60" width="19.8" height="0.9" fill="#a2b8cc"/>
<rect x="425.2" y="32.60" width="11.6" height="2.6" fill="#7a94ae"/>
<rect x="425.80" y="33.10" width="0.8" height="1.6" fill="#c6d6e4"/>
<rect x="427.60" y="33.10" width="0.8" height="1.6" fill="#c6d6e4"/>
<rect x="429.40" y="33.10" width="0.8" height="1.6" fill="#c6d6e4"/>
<rect x="431.20" y="33.10" width="0.8" height="1.6" fill="#c6d6e4"/>
<rect x="433.00" y="33.10" width="0.8" height="1.6" fill="#c6d6e4"/>
<rect x="434.80" y="33.10" width="0.8" height="1.6" fill="#c6d6e4"/>
<circle cx="440.6" cy="33.90" r="1.2" fill="#f4f8fc"/>
<path d="M453.8 29.2 H460.4 L457.1 32.8 Z" fill="#111"/>
<rect x="498.6" y="12.6" width="19.8" height="14.4" fill="#c8f0fc" stroke="#6e7f92" stroke-width="1.3"/>
<rect x="502.4" y="29.6" width="5" height="1.6" fill="#6e7f92"/>
<rect x="506.8" y="19.2" width="19.6" height="14.2" fill="#c2e4f8" stroke="#6e7f92" stroke-width="1.3"/>
<rect x="506.2" y="31.6" width="20.8" height="2.2" fill="#6e7f92"/>
<rect x="523.8" y="32.2" width="2" height="1" fill="#e8d040"/>
<rect x="514.6" y="33.8" width="4" height="2.4" fill="#aac0d8" stroke="#6e7f92" stroke-width="0.5"/>
<rect x="511.4" y="36" width="11.6" height="1.6" fill="#6e7f92"/>
<rect x="578.6" y="11.0" width="20.199999999999932" height="19.4" rx="1.6" fill="url(#drvf)" stroke="#c8c8c8" stroke-width="0.6"/><rect x="578.9" y="26.131999999999998" width="19.59999999999993" height="3.968" rx="1" fill="#d2d2d2"/><rect x="580.1" y="27.331999999999997" width="12.523999999999958" height="1.8679999999999999" fill="#eeeeee"/>
<circle cx="578.4" cy="30.4" r="7.6" fill="#ffffff" stroke="#dadada" stroke-width="0.9"/>
<rect x="573.4" y="29.4" width="9.8" height="2" fill="#9a9a9a"/>
<rect x="171.4" y="0" width="1.3" height="2.2" fill="#3a5a7a"/>
</svg>
</body></html>
